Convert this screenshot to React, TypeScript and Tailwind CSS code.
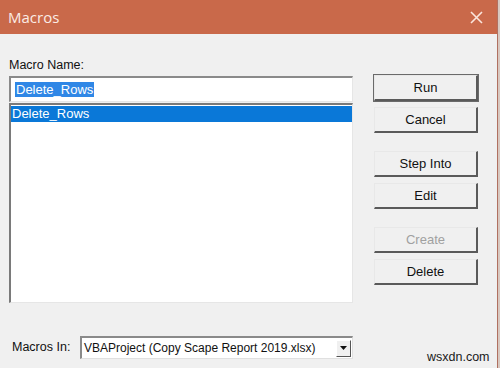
import React from "react";

const font = { fontFamily: '"Liberation Sans", Arial, sans-serif' };

function Btn({ label, def, disabled }: { label: string; def?: boolean; disabled?: boolean }) {
  return (
    <div
      className={`h-[26px] w-[104px] flex items-center justify-center text-[13px] bg-[#f0f0f0] border-t border-l border-t-[#e8e8e8] border-l-[#e8e8e8] border-b-2 border-r-2 border-b-[#5a5a5a] border-r-[#5a5a5a] ${
        def ? "outline outline-1 outline-[#6a6a6a]" : ""
      } ${disabled ? "text-[#a0a0a0]" : "text-[#111]"}`}
    >
      {label}
    </div>
  );
}

export default function App() {
  return (
    <div className="w-[500px] h-[368px] flex bg-[#f0f0f0] overflow-hidden" style={font}>
      <div className="w-[497px] h-full flex flex-col">
        <div className="h-[34px] bg-[#c9694a] flex items-center justify-between pl-[8px] pr-[14px]">
          <span className="text-[15px] text-[#fbece6]" style={{ fontFamily: '"Open Sans", "Noto Sans", sans-serif' }}>
            Macros
          </span>
          <svg width="13" height="13" viewBox="0 0 13 13">
            <path d="M1 1 L12 12 M12 1 L1 12" stroke="#fbe6dd" strokeWidth="1.6" />
          </svg>
        </div>
        <div className="flex-1 flex pl-[9px]">
          <div className="w-[344px] flex flex-col">
            <div className="mt-[23px] text-[12.5px] text-[#111] leading-[16px]">Macro Name:</div>
            <div className="mt-[3px] h-[26px] bg-white border-t-2 border-l-2 border-t-[#8a8a8a] border-l-[#8a8a8a] border-b border-r border-b-[#e6e6e6] border-r-[#e6e6e6] flex items-center pl-[4px]">
              <span className="bg-[#2f87e6] text-white text-[13px] leading-[15px] px-[1px]">Delete_Rows</span>
            </div>
            <div className="mt-[1px] h-[200px] bg-white border-t-2 border-l-2 border-t-[#7a7a7a] border-l-[#7a7a7a] border-b border-r border-b-[#e6e6e6] border-r-[#e6e6e6] pt-[1px]">
              <div className="h-[16px] bg-[#0a78d8] text-white text-[13px] leading-[16px] pl-[1px]">Delete_Rows</div>
            </div>
            <div className="mt-[33px] flex items-center">
              <span className="ml-[3px] w-[68px] text-[12.5px] text-[#111]">Macros In:</span>
              <div className="w-[273px] h-[23px] bg-white border-t-2 border-l-2 border-t-[#8a8a8a] border-l-[#8a8a8a] border-b border-r border-b-[#e0e0e0] border-r-[#e0e0e0] flex items-center justify-between">
                <span className="pl-[2px] text-[12px] text-[#111] whitespace-nowrap">VBAProject (Copy Scape Report 2019.xlsx)</span>
                <div className="w-[15px] h-[17px] mr-[1px] bg-[#f0f0f0] border-b border-r border-b-[#555] border-r-[#555] border-t border-l border-t-white border-l-white flex items-center justify-center">
                  <svg width="7" height="4" viewBox="0 0 7 4">
                    <path d="M0 0 H7 L3.5 4 Z" fill="#111" />
                  </svg>
                </div>
              </div>
            </div>
          </div>
          <div className="ml-[21px] flex flex-col pt-[41px] relative flex-1">
            <Btn label="Run" def />
            <div className="h-[6px]" />
            <Btn label="Cancel" />
            <div className="h-[18px]" />
            <Btn label="Step Into" />
            <div className="h-[6px]" />
            <Btn label="Edit" />
            <div className="h-[18px]" />
            <Btn label="Create" disabled />
            <div className="h-[6px]" />
            <Btn label="Delete" />
            <div className="flex-1" />
            <div className="text-[12.5px] leading-[14px] text-[#1a1a1a] pl-[53px] pb-[4px]">
              wsxdn.com
            </div>
          </div>
        </div>
      </div>
      <div className="w-[3px] h-full flex">
        <div className="w-[1px] bg-[#b07060]" />
        <div className="w-[2px] bg-[#d8c8c0]" />
      </div>
    </div>
  );
}
